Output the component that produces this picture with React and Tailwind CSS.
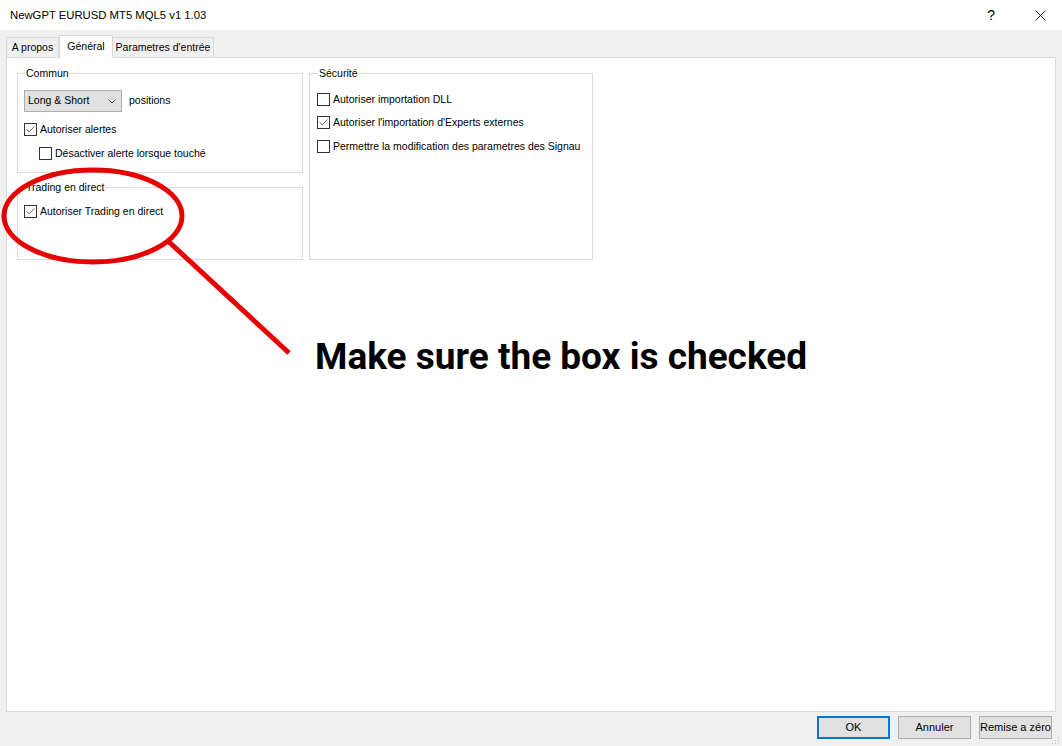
import { Check } from 'lucide-react'

const ui = { fontFamily: '"Liberation Sans", Arial, sans-serif' }

const Box = ({ checked }) => (
  <span className="flex h-[13px] w-[13px] shrink-0 items-center justify-center border border-[#333] bg-white">
    {checked && <Check size={11} strokeWidth={1.6} className="text-[#222]" />}
  </span>
)

const CheckRow = ({ checked, label, className = '' }) => (
  <label className={`flex h-[13px] items-center gap-[3px] whitespace-nowrap ${className}`}>
    <Box checked={checked} />
    <span className="leading-[13px]">{label}</span>
  </label>
)

const Group = ({ title, className = '', children }) => (
  <fieldset className={`min-w-0 border border-[#dcdcdc] px-[6px] ${className}`}>
    <legend className="ml-[1px] px-[1px] leading-[14px]">{title}</legend>
    {children}
  </fieldset>
)

const Btn = ({ children, primary }) => (
  <button
    className={`h-[23px] w-[73px] whitespace-nowrap bg-[#e1e1e1] text-[11px] ${
      primary ? 'border-2 border-[#0078d7]' : 'border border-[#adadad]'
    }`}
  >
    {children}
  </button>
)

export default function App() {
  return (
    <div
      className="relative flex h-[746px] w-[1062px] flex-col overflow-hidden bg-[#f0f0f0] text-[10.5px] text-black"
      style={ui}
    >
      {/* Title bar */}
      <div className="flex h-[30px] items-center bg-white pl-[10px] text-[11.3px]">
        <span>NewGPT EURUSD MT5 MQL5 v1 1.03</span>
        <span className="ml-auto mr-[40px] text-[14px]">?</span>
        <svg width="11" height="11" viewBox="0 0 11 11" className="mr-[16px]">
          <path d="M0.5 0.5 L10.5 10.5 M10.5 0.5 L0.5 10.5" stroke="#222" strokeWidth="1" />
        </svg>
      </div>

      {/* Tabs */}
      <div className="mt-[5px] flex h-[22px] items-end pl-[6px]">
        <div className="flex h-[20px] w-[53px] items-center justify-center border border-b-0 border-[#d9d9d9] bg-[#f0f0f0]">
          A propos
        </div>
        <div className="relative z-10 -mb-[1px] flex h-[23px] w-[54px] items-start justify-center border border-b-0 border-[#d9d9d9] bg-white pt-[3px]">
          Général
        </div>
        <div className="flex h-[20px] w-[101px] items-center justify-center border border-b-0 border-l-0 border-[#d9d9d9] bg-[#f0f0f0]">
          Parametres d'entrée
        </div>
      </div>

      {/* Panel */}
      <div className="mx-[6px] h-[655px] border border-[#d9d9d9] bg-white pl-[10px] pt-[8px]">
        <div className="flex gap-[6px]">
          <div className="flex w-[286px] flex-col gap-[7px]">
            <Group title="Commun" className="h-[107px]">
              <div className="mt-[10px] flex items-center gap-[7px]">
                <div className="flex h-[22px] w-[98px] items-center justify-between border border-[#adadad] bg-[#e1e1e1] pl-[3px] pr-[5px]">
                  <span>Long &amp; Short</span>
                  <svg width="8" height="5" viewBox="0 0 8 5">
                    <path d="M0.5 0.5 L4 4 L7.5 0.5" fill="none" stroke="#444" strokeWidth="1" />
                  </svg>
                </div>
                <span>positions</span>
              </div>
              <CheckRow checked label="Autoriser alertes" className="mt-[11px]" />
              <CheckRow label="Désactiver alerte lorsque touché" className="ml-[15px] mt-[11px]" />
            </Group>
            <Group title="Trading en direct" className="h-[80px]">
              <CheckRow checked label="Autoriser Trading en direct" className="mt-[11px]" />
            </Group>
          </div>
          <Group title="Sécurité" className="h-[194px] w-[284px] shrink-0 overflow-hidden px-[7px]">
            <CheckRow label="Autoriser importation DLL" className="mt-[13px]" />
            <CheckRow checked label="Autoriser l'importation d'Experts externes" className="mt-[10px]" />
            <div className="mt-[11px] w-[263px] overflow-hidden">
              <CheckRow label="Permettre la modification des parametres des Signaux" />
            </div>
          </Group>
        </div>
      </div>

      {/* Buttons */}
      <div className="mt-[4px] flex justify-end gap-[8px] pr-[10px]">
        <Btn primary>OK</Btn>
        <Btn>Annuler</Btn>
        <Btn>Remise a zéro</Btn>
      </div>

      {/* Resize grip */}
      <svg width="8" height="8" viewBox="0 0 8 8" className="absolute bottom-[1px] right-[2px]">
        <g fill="#bcbcbc">
          <rect x="6" y="0" width="1" height="1" />
          <rect x="3" y="3" width="1" height="1" />
          <rect x="6" y="3" width="1" height="1" />
          <rect x="0" y="6" width="1" height="1" />
          <rect x="3" y="6" width="1" height="1" />
          <rect x="6" y="6" width="1" height="1" />
        </g>
      </svg>

      {/* Annotation */}
      <svg className="pointer-events-none absolute left-0 top-0" width="1062" height="746">
        <ellipse cx="93" cy="216" rx="89" ry="46" fill="none" stroke="#e60000" strokeWidth="5" />
        <line x1="168" y1="241" x2="289" y2="353" stroke="#e60000" strokeWidth="5" />
      </svg>
      <div
        className="absolute left-[315px] top-[338px] text-[37px] font-bold leading-[37px] text-black"
        style={{ fontFamily: 'Roboto, "Liberation Sans", sans-serif' }}
      >
        Make sure the box is checked
      </div>
    </div>
  )
}
